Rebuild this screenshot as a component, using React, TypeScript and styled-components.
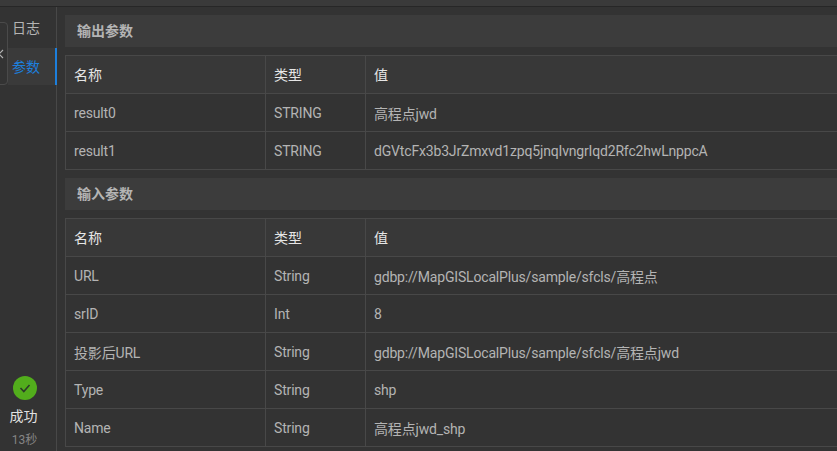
import * as React from "react";
import styled, { createGlobalStyle } from "styled-components";

type Param = { name: string; type: string; value: string };

const outputs: Param[] = [
  { name: "result0", type: "STRING", value: "高程点jwd" },
  { name: "result1", type: "STRING", value: "dGVtcFx3b3JrZmxvd1zpq5jnqIvngrIqd2Rfc2hwLnppcA" },
];

const inputs: Param[] = [
  { name: "URL", type: "String", value: "gdbp://MapGISLocalPlus/sample/sfcls/高程点" },
  { name: "srID", type: "Int", value: "8" },
  { name: "投影后URL", type: "String", value: "gdbp://MapGISLocalPlus/sample/sfcls/高程点jwd" },
  { name: "Type", type: "String", value: "shp" },
  { name: "Name", type: "String", value: "高程点jwd_shp" },
];

const GlobalStyle = createGlobalStyle`
  html, body {
    margin: 0;
    height: 100%;
    overflow: hidden;
    background: #333333;
  }
  * {
    box-sizing: border-box;
  }
`;

const Page = styled.div`
  width: 837px;
  height: 451px;
  display: flex;
  flex-direction: column;
  overflow: hidden;
  background: #333333;
  color: #b4b4b4;
  font-family: Roboto, "Noto Sans CJK SC", sans-serif;
  font-size: 14px;
`;

const TopBar = styled.div`
  height: 7px;
  flex: none;
  background: #3a3a3a;
  border-bottom: 1px solid #272727;
`;

const Body = styled.div`
  flex: 1;
  display: flex;
  min-height: 0;
`;

const Sidebar = styled.aside`
  width: 57px;
  flex: none;
  position: relative;
  display: flex;
  flex-direction: column;
  padding: 3px 0 0 8px;
  border-right: 1px solid #484848;
`;

const Tab = styled.div<{ $active?: boolean }>`
  height: ${(p) => (p.$active ? "37px" : "38px")};
  padding: 0 0 ${(p) => (p.$active ? "1px" : "4px")} 4px;
  display: flex;
  align-items: center;
  color: ${(p) => (p.$active ? "#1d7fdc" : "#b4b4b4")};
  background: ${(p) => (p.$active ? "#3a3a3a" : "transparent")};
  border-right: 2px solid ${(p) => (p.$active ? "#1d7fdc" : "transparent")};
  margin-right: -1px;
`;

const Collapse = styled.div`
  position: absolute;
  left: -10px;
  top: 15px;
  width: 18px;
  height: 63px;
  border: 1px solid #4a4a4a;
  border-radius: 4px;
  display: flex;
  align-items: center;
  justify-content: flex-end;
  padding-right: 3px;
`;

const Status = styled.div`
  margin: auto 0 0 -8px;
  padding: 0 7px 1px 0;
  display: flex;
  flex-direction: column;
  align-items: center;
`;

const StatusLabel = styled.div`
  margin: 6px 2px 0 0;
  line-height: 20px;
  color: #e2e2e2;
`;

const StatusTime = styled.div`
  margin-top: 4px;
  font-size: 12px;
  line-height: 20px;
  color: #858585;
`;

const Content = styled.main`
  flex: 1;
  min-width: 0;
  padding: 8px 0 0 8px;
  display: flex;
  flex-direction: column;
`;

const SectionHeader = styled.div`
  height: 32px;
  flex: none;
  padding: 0 0 2px 12px;
  display: flex;
  align-items: center;
  background: #3c3c3c;
  font-weight: 700;
  color: #b4b4b4;
  margin-bottom: 8px;
`;

const Table = styled.div`
  display: grid;
  grid-template-columns: 200px 100px 1fr;
  flex: none;
  border-top: 1px solid #484848;
  border-left: 1px solid #484848;
  margin-bottom: 8px;
  margin-right: -2px;
`;

const HeadCell = styled.div`
  height: 38px;
  padding: 0 0 2px 8px;
  display: flex;
  align-items: center;
  background: #383838;
  color: #e6e6e6;
  border-right: 1px solid #484848;
  border-bottom: 1px solid #484848;
`;

const Cell = styled.div`
  height: 38px;
  padding-left: 8px;
  display: flex;
  align-items: center;
  color: #b4b4b4;
  letter-spacing: -0.17px;
  white-space: nowrap;
  border-right: 1px solid #484848;
  border-bottom: 1px solid #484848;
`;

const ParamTable = ({ rows }: { rows: Param[] }) => (
  <Table>
    <HeadCell>名称</HeadCell>
    <HeadCell>类型</HeadCell>
    <HeadCell>值</HeadCell>
    {rows.map((row) => (
      <React.Fragment key={row.name}>
        <Cell>{row.name}</Cell>
        <Cell>{row.type}</Cell>
        <Cell>{row.value}</Cell>
      </React.Fragment>
    ))}
  </Table>
);

export default function App() {
  return (
    <Page>
      <GlobalStyle />
      <TopBar />
      <Body>
        <Sidebar>
          <Tab>日志</Tab>
          <Tab $active>参数</Tab>
          <Status>
            <svg width="24" height="24" viewBox="0 0 24 24">
              <circle cx="12" cy="12" r="12" fill="#52ad1c" />
              <path d="M7.5 12 L10.8 15.5 L16.5 9" fill="none" stroke="#2c3a28" strokeWidth="1.6" />
            </svg>
            <StatusLabel>成功</StatusLabel>
            <StatusTime>13秒</StatusTime>
          </Status>
          <Collapse>
            <svg width="6" height="12" viewBox="0 0 6 12" fill="none" stroke="#b4b4b4" strokeWidth="1.2">
              <path d="M5 2 L1 6 L5 10" />
            </svg>
          </Collapse>
        </Sidebar>
        <Content>
          <SectionHeader>输出参数</SectionHeader>
          <ParamTable rows={outputs} />
          <SectionHeader>输入参数</SectionHeader>
          <ParamTable rows={inputs} />
        </Content>
      </Body>
    </Page>
  );
}
